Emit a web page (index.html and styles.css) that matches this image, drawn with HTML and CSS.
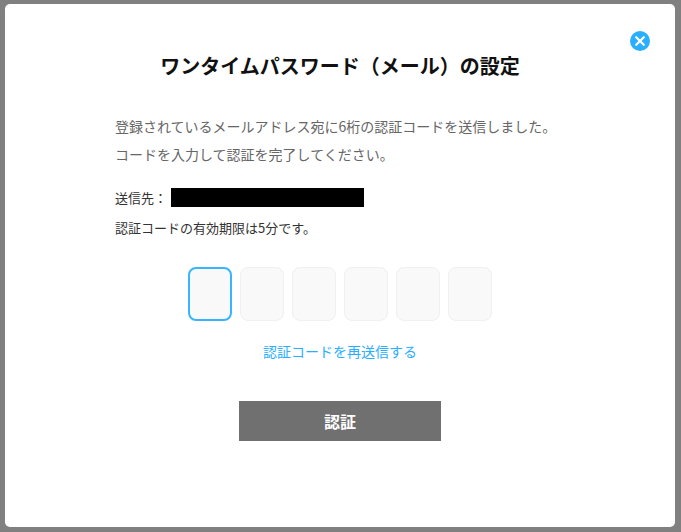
FILE: index.html
```html
<!DOCTYPE html>
<html lang="ja">
<head>
<meta charset="utf-8">
<title>ワンタイムパスワード(メール)の設定</title>
<link rel="stylesheet" href="styles.css">
</head>
<body>
<div class="modal">
  <button class="close" aria-label="閉じる">
    <svg viewBox="0 0 20 20" width="20" height="20"><circle cx="10" cy="10" r="10" fill="#2aaeff"/><path d="M6.2 6.2l7.6 7.6M13.8 6.2l-7.6 7.6" stroke="#fff" stroke-width="2.2" stroke-linecap="round" fill="none"/></svg>
  </button>
  <h1 class="title">ワンタイムパスワード（メール）の設定</h1>
  <div class="body">
    <p class="lead">登録されているメールアドレス宛に6桁の認証コードを送信しました。</p>
    <p class="lead">コードを入力して認証を完了してください。</p>
    <div class="dest"><span>送信先：</span><span class="redact"></span></div>
    <p class="note">認証コードの有効期限は5分です。</p>
  </div>
  <div class="codes">
    <input class="code active" maxlength="1" aria-label="1">
    <input class="code" maxlength="1" aria-label="2">
    <input class="code" maxlength="1" aria-label="3">
    <input class="code" maxlength="1" aria-label="4">
    <input class="code" maxlength="1" aria-label="5">
    <input class="code" maxlength="1" aria-label="6">
  </div>
  <a class="resend" href="#">認証コードを再送信する</a>
  <button class="submit">認証</button>
</div>
</body>
</html>
```
FILE: styles.css
```css
* { box-sizing: border-box; }
html, body { margin: 0; height: 100%; }
body {
  background: #808080;
  padding: 4px 6px 5px 5px;
  font-family: "Noto Sans CJK JP", "Noto Sans", sans-serif;
  overflow: hidden;
}
.modal {
  position: relative;
  height: 523px;
  background: #fff;
  border-radius: 5px;
  display: flex;
  flex-direction: column;
  align-items: center;
  padding-top: 46px;
}
.close {
  position: absolute;
  top: 27px;
  right: 25px;
  width: 20px;
  height: 20px;
  padding: 0;
  border: 0;
  background: none;
  display: block;
}
.close svg { display: block; }
.title {
  margin: 0;
  font-size: 20px;
  line-height: 32px;
  font-weight: 700;
  color: #111;
  text-align: center;
}
.body {
  align-self: stretch;
  padding: 0 0 0 110px;
  margin-top: 30px;
}
.lead {
  margin: 0;
  font-size: 14px;
  line-height: 28px;
  color: #666;
}
.dest {
  display: flex;
  align-items: center;
  margin-top: 20px;
  font-size: 13px;
  line-height: 20px;
  color: #333;
}
.redact {
  width: 193px;
  height: 19px;
  margin: 0 0 1px 4px;
  background: #000;
}
.note {
  margin: 10px 0 0;
  font-size: 13px;
  line-height: 20px;
  color: #333;
}
.codes {
  display: flex;
  gap: 8px;
  margin-top: 29px;
}
.code {
  width: 44px;
  height: 54px;
  border: 1px solid #f0f0f0;
  border-radius: 8px;
  background: #f9f9f9;
  padding: 0;
  outline: none;
}
.code.active { border: 2px solid #39b4ff; }
.resend {
  margin-top: 20px;
  font-size: 14px;
  line-height: 20px;
  color: #2aaeff;
  text-decoration: none;
}
.submit {
  margin-top: 40px;
  width: 202px;
  height: 40px;
  border: 0;
  background: #707070;
  color: #fff;
  font-family: inherit;
  font-size: 16px;
  font-weight: 700;
}
```
